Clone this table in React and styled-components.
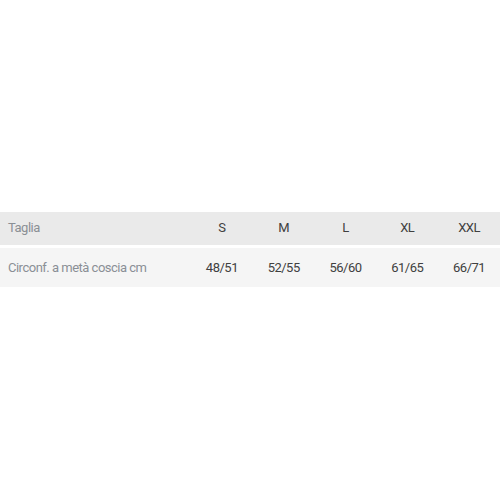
import React from 'react';
import styled, { createGlobalStyle } from 'styled-components';

const GlobalStyle = createGlobalStyle`
    html, body {
        margin: 0;
        padding: 0;
        background: #fff;
    }
    body {
        font-family: Roboto, "Liberation Sans", sans-serif;
    }
`;

const sizes = ['S', 'M', 'L', 'XL', 'XXL'];
const thigh = ['48/51', '52/55', '56/60', '61/65', '66/71'];

const Page = styled.div`
    width: 500px;
    height: 500px;
    padding-top: 212px;
    box-sizing: border-box;
`;

const Table = styled.div`
    width: 100%;
    display: flex;
    flex-direction: column;
    gap: 3px;
`;

const Row = styled.div`
    display: grid;
    grid-template-columns: 191px repeat(5, 1fr);
    align-items: center;
    height: ${props => props.$h}px;
    padding-bottom: ${props => props.$pb || 0}px;
    box-sizing: border-box;
    background: ${props => props.$bg};
    font-size: 13px;
    letter-spacing: -0.5px;
`;

const Label = styled.div`
    padding-left: 8px;
    color: #8a8f95;
`;

const Cell = styled.div`
    text-align: center;
    color: #404040;
`;

const App = () => (
    <>
        <GlobalStyle />
        <Page>
            <Table>
                <Row $h={33} $pb={2} $bg="#eaeaea">
                    <Label>Taglia</Label>
                    {sizes.map(s => <Cell key={s}>{s}</Cell>)}
                </Row>
                <Row $h={39} $bg="#f5f5f5">
                    <Label>Circonf. a metà coscia cm</Label>
                    {thigh.map(v => <Cell key={v}>{v}</Cell>)}
                </Row>
            </Table>
        </Page>
    </>
);

export default App;
